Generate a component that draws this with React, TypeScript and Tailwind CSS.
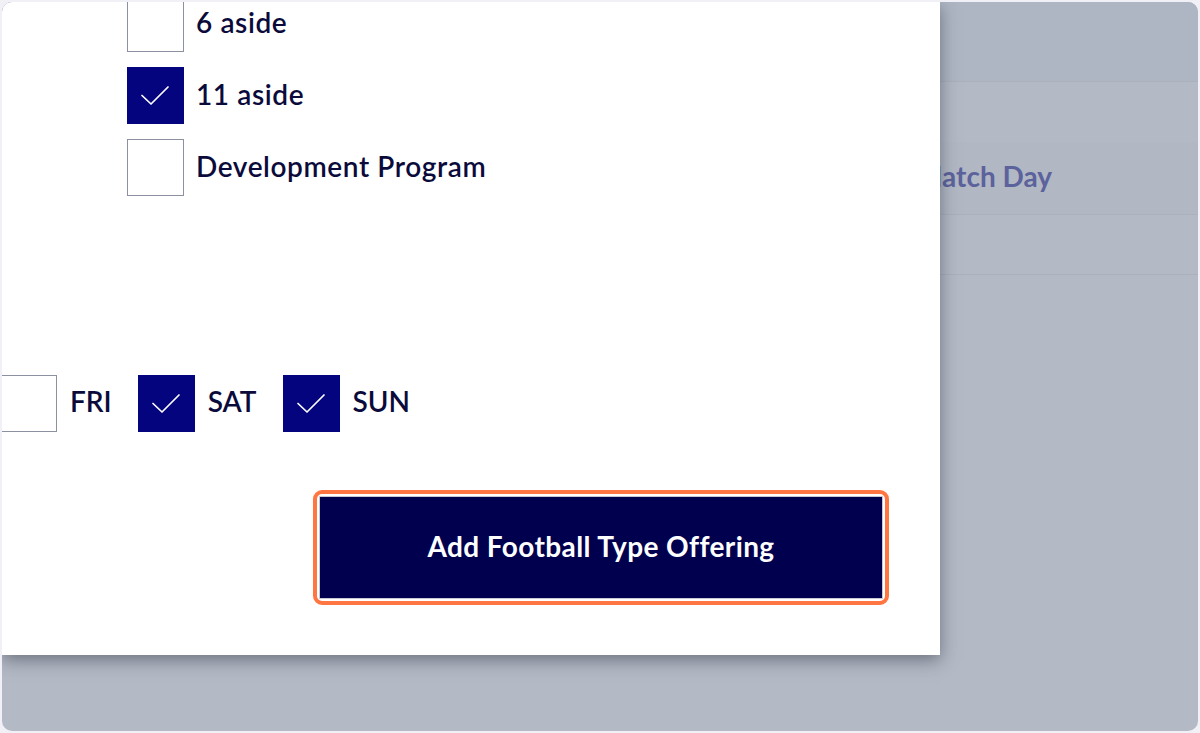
import React from "react";

const FONT = { fontFamily: "Lato, 'Noto Sans', sans-serif" };

function Box({ checked }: { checked?: boolean }) {
  return (
    <span
      className={
        checked
          ? "flex h-[57px] w-[57px] shrink-0 items-center justify-center bg-[#04047e]"
          : "flex h-[57px] w-[57px] shrink-0 items-center justify-center border border-[#8c91a1] bg-white"
      }
    >
      {checked && (
        <svg width="57" height="57" viewBox="0 0 57 57" fill="none">
          <path d="M15 28.5 L24 37 L41 20" stroke="white" strokeWidth="1.7" strokeLinecap="round" strokeLinejoin="round" />
        </svg>
      )}
    </span>
  );
}

const TYPES = [
  { label: "6 aside", checked: false },
  { label: "11 aside", checked: true },
  { label: "Development Program", checked: false },
];

const DAYS = [
  { label: "FRI", checked: false },
  { label: "SAT", checked: true },
  { label: "SUN", checked: true },
];

export default function App() {
  return (
    <div className="h-[733px] w-[1200px] bg-[#f0f0f6] p-[2px]" style={FONT}>
      <div className="relative h-full overflow-hidden rounded-[10px] bg-[#b3b9c5]">
        {/* page behind the overlay */}
        <div className="flex flex-col">
          <div className="h-[80px] border-b border-[#aab1bd] bg-[#aeb6c3]" />
          <div className="h-[60px] bg-[#b3b9c5]" />
          <div className="flex h-[73px] items-center border-b border-[#aab1bd] bg-[#b1b8c4] pb-[4px] pl-[914px] text-[28px] font-bold text-[#5c629c]">
            Match Day
          </div>
          <div className="h-[60px] border-b border-[#aab1bd] bg-[#b3b9c5]" />
        </div>

        {/* modal */}
        <div className="absolute left-0 top-0 flex h-[653px] w-[938px] flex-col bg-white text-[#0b0b3b] shadow-[0_5px_16px_rgba(40,45,60,0.5)]">
          <div className="-mt-[7px] flex flex-col gap-[15px] pl-[125px]">
            {TYPES.map((t) => (
              <label key={t.label} className="flex items-center gap-3 text-[28px] font-semibold tracking-[0.6px]">
                <Box checked={t.checked} />
                <span className="mb-[4px]">{t.label}</span>
              </label>
            ))}
          </div>

          <div className="-ml-[2px] mt-[179px] flex items-center gap-[26px]">
            {DAYS.map((d) => (
              <label key={d.label} className="flex items-center gap-[13px] text-[28px] font-semibold">
                <Box checked={d.checked} />
                <span className="mb-[5px]">{d.label}</span>
              </label>
            ))}
          </div>

          <div className="mt-[58px] flex justify-end pr-[51px]">
            <div className="rounded-[9px] border-[4px] border-[#ff7643] p-[2px]">
              <button className="flex h-[103px] w-[564px] items-center justify-center border border-[#c8c9d3] bg-[#00004f] pb-[4px] text-[28px] font-bold tracking-[0.4px] text-white">
                Add Football Type Offering
              </button>
            </div>
          </div>
        </div>
      </div>
    </div>
  );
}
